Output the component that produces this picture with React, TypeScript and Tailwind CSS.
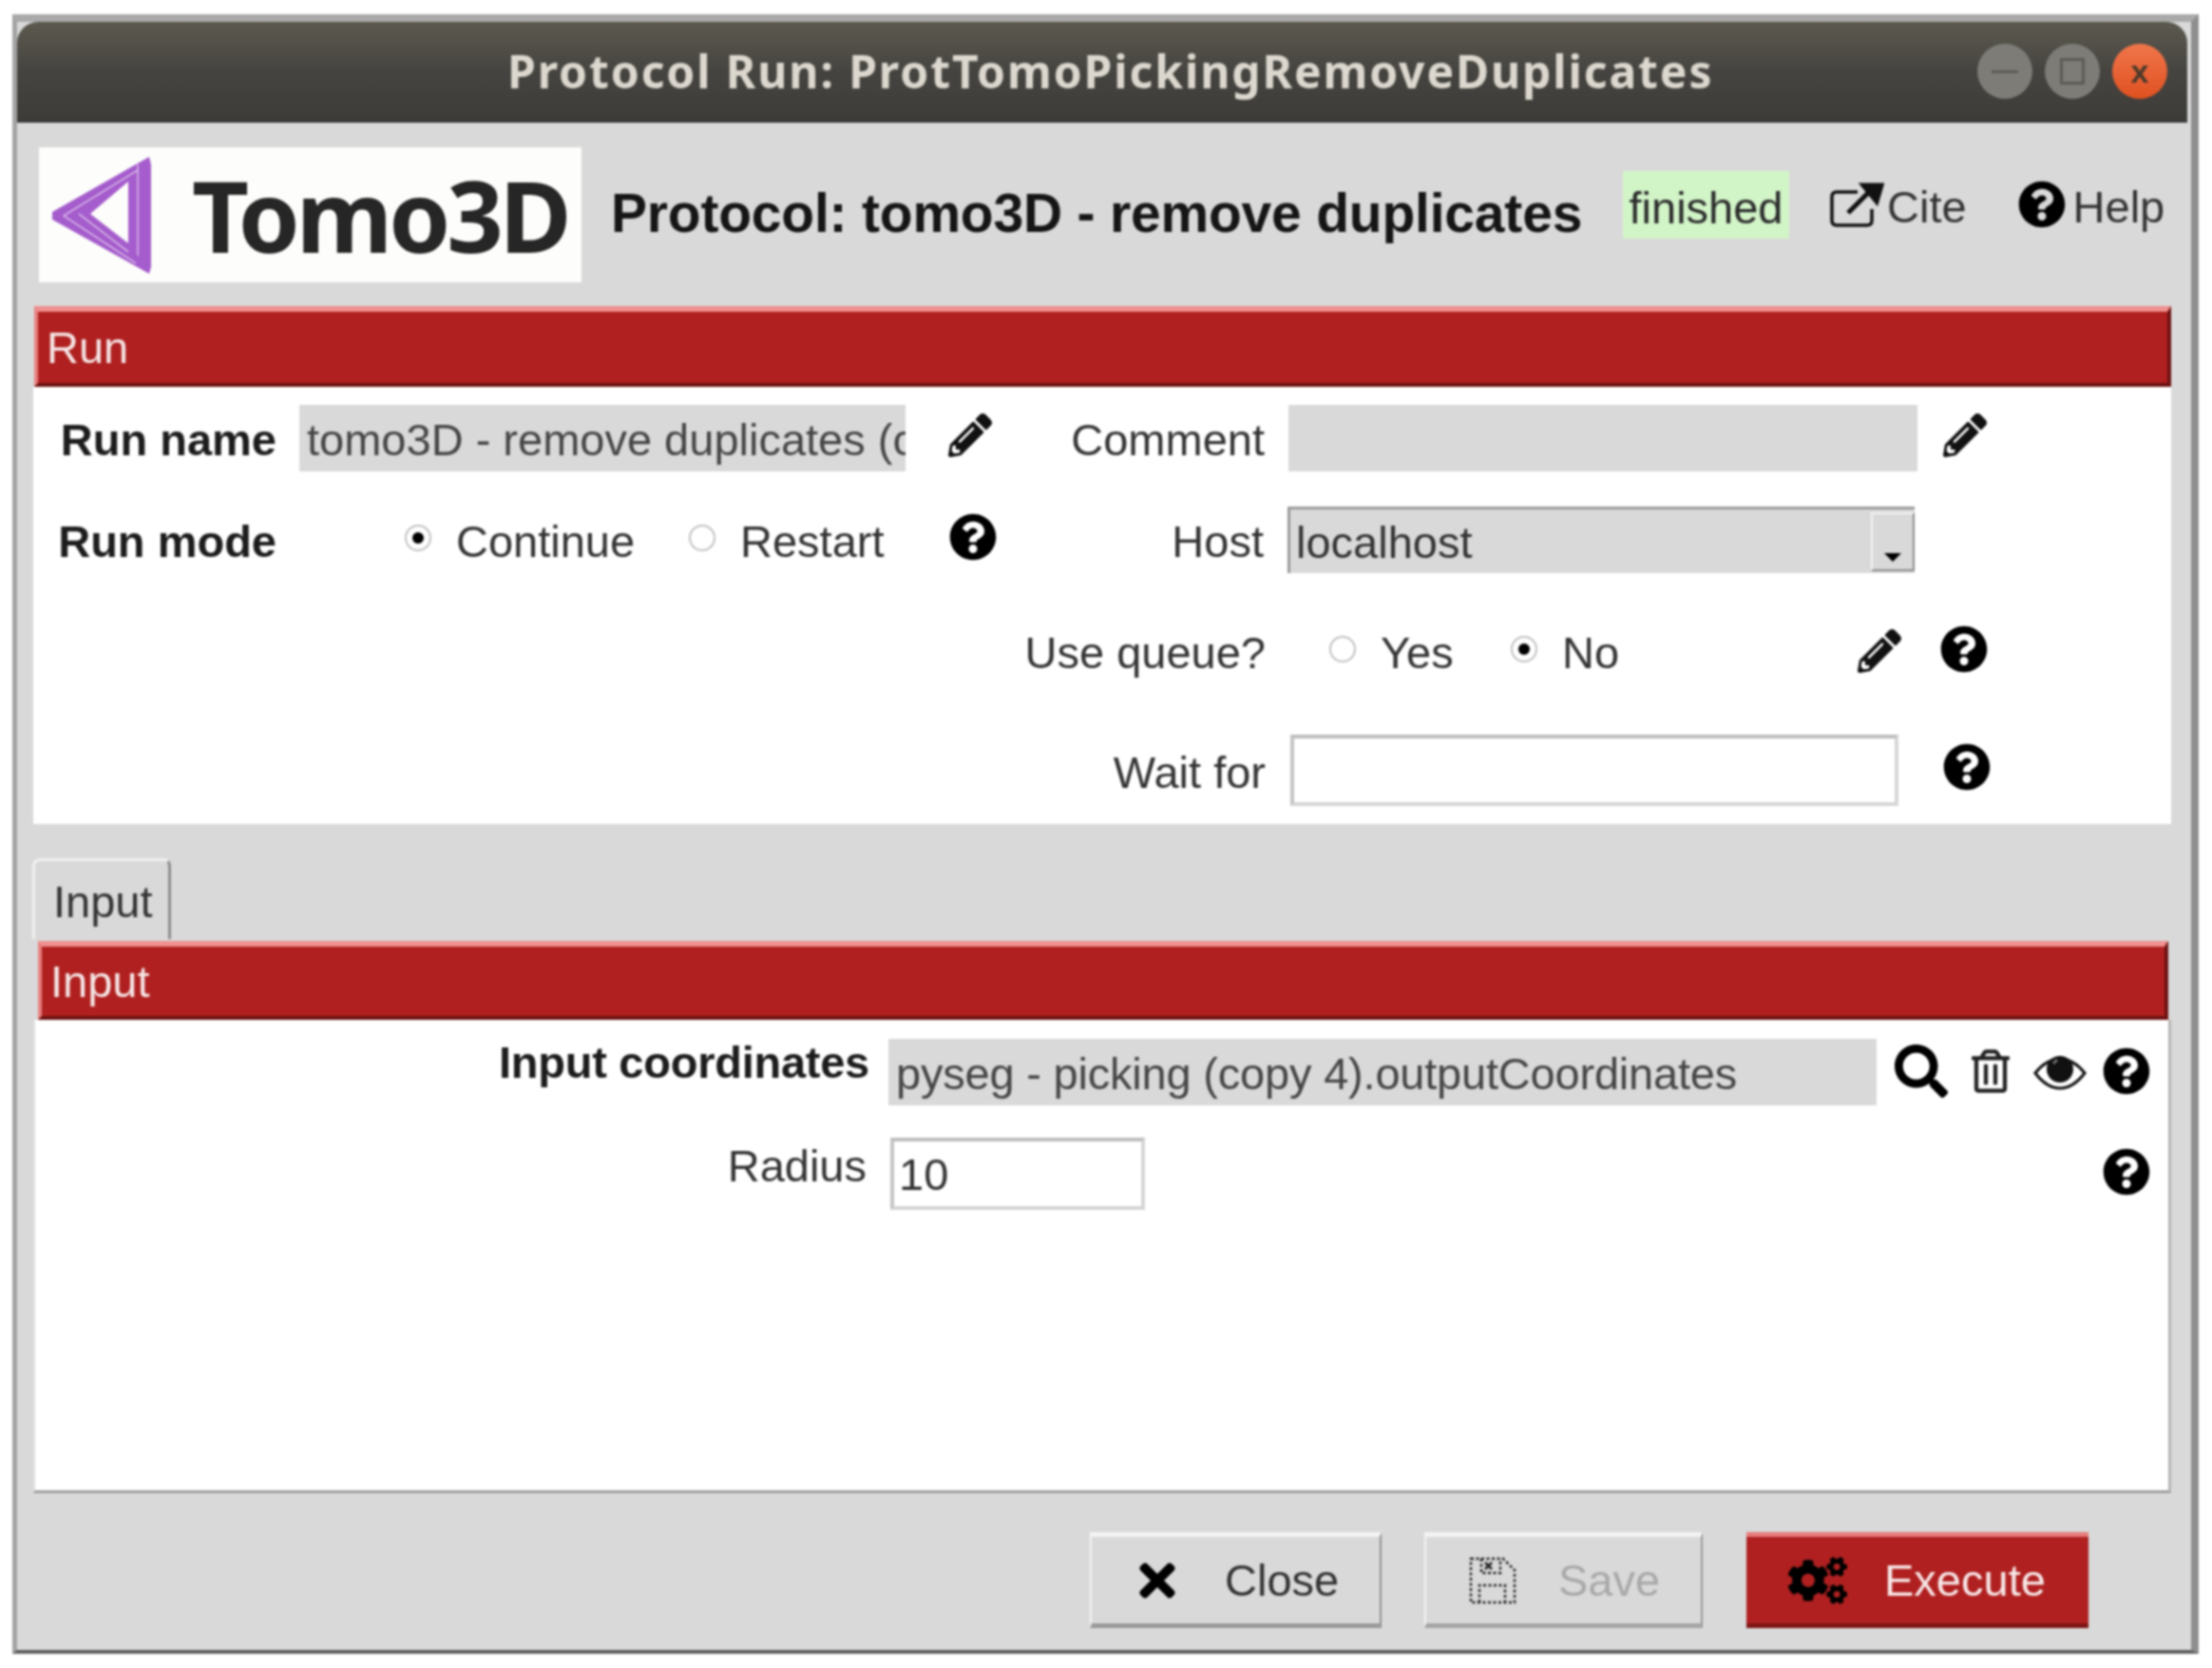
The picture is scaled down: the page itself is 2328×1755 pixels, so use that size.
import type { ReactNode } from 'react'
import { FaCogs, FaPencilAlt, FaQuestionCircle, FaRegTrashAlt, FaSearch, FaTimes } from 'react-icons/fa'

// Tk-style raised band used as section header
function Band({ title, className }: { title: string; className: string }) {
  return (
    <div className={`flex items-center bg-[#b02020] border-t-[6px] border-t-[#f09090] border-b-[4px] border-b-[#6e1212] border-l-[4px] border-l-[#e88080] border-r-[4px] border-r-[#6e1212] pl-[9px] text-[#f6e6e6] ${className}`}>
      {title}
    </div>
  )
}

function Help({ className = '' }: { className?: string }) {
  return <FaQuestionCircle className={`shrink-0 w-[50px] h-[50px] text-black ${className}`} />
}

function Pencil({ className = '' }: { className?: string }) {
  return <FaPencilAlt className={`shrink-0 w-[46px] h-[46px] text-[#111] ${className}`} />
}

function Label({ children, className }: { children: ReactNode; className: string }) {
  return <div className={`shrink-0 pt-[3px] text-right ${className}`}>{children}</div>
}

function Radio({ label, checked, width }: { label: string; checked?: boolean; width: string }) {
  return (
    <div className={`flex items-center shrink-0 ${width}`}>
      <span className="flex items-center justify-center w-[28px] h-[28px] -mt-[4px] rounded-full bg-white border-[2px] border-[#c2c2c2]">
        {checked && <span className="w-[12px] h-[12px] rounded-full bg-black" />}
      </span>
      <span className="ml-[26px] pt-[3px]">{label}</span>
    </div>
  )
}

function Field({ children, className }: { children?: ReactNode; className: string }) {
  return <div className={`flex items-center overflow-hidden whitespace-nowrap bg-[#d9d9d9] pl-[8px] pt-[3px] text-[#454545] ${className}`}>{children}</div>
}

function Entry({ children, className }: { children?: ReactNode; className: string }) {
  return (
    <div className={`flex items-center bg-white border-[4px] border-[#d6d6d6] border-t-[#bdbdbd] border-l-[#c4c4c4] pl-[5px] pt-[2px] text-[#333] ${className}`}>
      {children}
    </div>
  )
}

function TomoLogo() {
  return (
    <div className="flex items-center shrink-0 w-[571px] h-[142px] bg-[#fdfefb] ml-[23px] mt-[26px]">
      <svg viewBox="0 0 104 123" className="shrink-0 w-[104px] h-[123px] ml-[14px]">
        <path fillRule="evenodd" fill="#a55ccc" d="M102 0 L104 8 V116 L102 123 L0 66 V58 Z M80 26 L40 60 L80 91 Z" />
        <path fill="none" stroke="#e6d3f0" strokeWidth="1.2" d="M90 8 V104 M90 14 L12 62 L88 112 M28 60 L80 100" />
      </svg>
      <span className="ml-[43px] whitespace-nowrap font-['Noto_Sans'] font-bold text-[104px] leading-none tracking-[-4px] text-[#262626]">Tomo3D</span>
    </div>
  )
}

function CiteIcon() {
  return (
    <svg viewBox="0 0 58 48" className="shrink-0 w-[58px] h-[48px] -mt-[4px]">
      <path d="M30 10 H8 Q3 10 3 15 V40 Q3 45 8 45 H40 Q45 45 45 40 V28" fill="none" stroke="#111" strokeWidth="3.5" />
      <path d="M20 32 L42 10 M36 3 H55 L50 20 Z" fill="#111" stroke="#111" strokeWidth="5" />
    </svg>
  )
}

function SaveIcon() {
  return (
    <svg viewBox="0 0 50 50" className="shrink-0 ml-[45px] w-[50px] h-[50px]">
      <g fill="none" stroke="#222" strokeWidth="2.4" strokeDasharray="3 2.5">
        <path d="M2 2 H36 L48 14 V48 H2 Z" />
        <path d="M13 2 V17 H33 V2 M11 48 V30 H38 V48" />
      </g>
      <path d="M17 6 L24 13 M24 6 L17 13" stroke="#222" strokeWidth="2.5" />
    </svg>
  )
}

// outline eye with the big pupil seen in the reference
function EyeIcon() {
  return (
    <svg viewBox="0 0 56 40" className="shrink-0 ml-[25px] w-[56px] h-[40px]">
      <path d="M2 21 Q14 6 28 6 Q42 6 54 21 Q42 37 28 37 Q14 37 2 21 Z" fill="#fff" stroke="#111" strokeWidth="3" />
      <circle cx="28" cy="17" r="14" fill="#111" />
      <path d="M21 11 L25 7" stroke="#777" strokeWidth="2.5" />
    </svg>
  )
}

export default function App() {
  return (
    <div className="w-[2328px] h-[1755px] bg-white pt-[15px] pl-[13px] font-['Liberation_Sans',Arial,sans-serif] text-[47px] leading-none text-[#333] blur-[1px]">
      {/* Window frame */}
      <div className="w-[2301px] h-[1725px] flex flex-col bg-[#d9d9d9] border-t-[8px] border-t-[#a9a9a9] border-l-[5px] border-l-[#a3a3a3] border-r-[8px] border-r-[#8e8e8e] border-b-[4px] border-b-[#5e5e5e]">
        {/* Title bar */}
        <div className="flex items-center shrink-0 w-[2284px] h-[106px] rounded-t-[22px] bg-gradient-to-b from-[#5c5a4f] via-[#464440] to-[#3e3c38] border-b-[2px] border-b-[#333]">
          <div className="ml-[516px] w-[1267px] whitespace-nowrap font-['Noto_Sans'] font-bold text-[48px] tracking-[1.9px] text-[#dcd8cf]">
            Protocol Run: ProtTomoPickingRemoveDuplicates
          </div>
          <div className="ml-[280px] flex items-center">
            <span className="flex items-center justify-center w-[58px] h-[58px] rounded-full bg-[#7d7c77]">
              <span className="w-[28px] h-[3px] bg-[#5c5b57]" />
            </span>
            <span className="ml-[13px] flex items-center justify-center w-[58px] h-[58px] rounded-full bg-[#7d7c77]">
              <span className="w-[26px] h-[28px] border-[3px] border-[#5c5b57]" />
            </span>
            <span className="ml-[13px] flex items-center justify-center w-[58px] h-[58px] rounded-full bg-gradient-to-b from-[#f0764a] to-[#e0501f] text-[34px] font-bold text-[#4a3a2a]">
              x
            </span>
          </div>
        </div>

        {/* Protocol header */}
        <div className="flex items-start shrink-0 h-[193px]">
          <TomoLogo />
          <div className="ml-[31px] mt-[67px] w-[1021px] whitespace-nowrap font-bold text-[57px] leading-none tracking-[-0.2px] text-[#151515]">
            Protocol: tomo3D - remove duplicates
          </div>
          <div className="ml-[44px] mt-[51px] flex items-center justify-center w-[175px] h-[71px] pt-[5px] bg-[#d2f5c8] text-[#2a2a2a]">
            finished
          </div>
          <div className="ml-[42px] mt-[65px] flex items-center">
            <CiteIcon />
            <span className="ml-[3px] text-[#333]">Cite</span>
            <FaQuestionCircle className="ml-[54px] -mt-[6px] w-[50px] h-[50px] text-black" />
            <span className="ml-[8px] text-[#333]">Help</span>
          </div>
        </div>

        {/* Run section */}
        <Band title="Run" className="shrink-0 ml-[18px] w-[2249px] h-[85px]" />
        <div className="shrink-0 ml-[17px] w-[2250px] h-[460px] bg-white">
          <div className="flex items-center mt-[19px] h-[70px]">
            <Label className="w-[256px] font-bold text-[#1c1c1c]">Run name</Label>
            <Field className="shrink-0 ml-[24px] w-[638px] h-[70px]">tomo3D - remove duplicates (copy 1)</Field>
            <Pencil className="ml-[45px] -mt-[6px]" />
            <Label className="w-[287px]">Comment</Label>
            <Field className="shrink-0 ml-[25px] w-[662px] h-[70px]" />
            <Pencil className="ml-[27px] -mt-[6px]" />
          </div>
          <div className="flex items-center mt-[37px] h-[70px]">
            <Label className="w-[256px] font-bold text-[#1c1c1c]">Run mode</Label>
            <div className="ml-[135px] flex">
              <Radio label="Continue" checked width="w-[299px]" />
              <Radio label="Restart" width="w-[274px]" />
            </div>
            <Help className="-mt-[6px]" />
            <Label className="w-[281px]">Host</Label>
            <div className="ml-[25px] flex items-center justify-between w-[660px] h-[70px] bg-[#d9d9d9] border-t-[3px] border-l-[3px] border-[#9a9a9a] pl-[6px] text-[#333]">
              <span className="pt-[2px]">localhost</span>
              <span className="flex items-end justify-center w-[46px] h-[62px] border-[2px] border-t-[#f3f3f3] border-l-[#f3f3f3] border-r-[#8a8a8a] border-b-[#8a8a8a] pb-[8px]">
                <span className="border-x-[9px] border-t-[9px] border-x-transparent border-t-black" />
              </span>
            </div>
          </div>
          <div className="flex items-center mt-[52px] h-[60px]">
            <Label className="w-[1297px]">Use queue?</Label>
            <div className="ml-[67px] flex">
              <Radio label="Yes" width="w-[191px]" />
              <Radio label="No" checked width="w-[365px]" />
            </div>
            <Pencil />
            <Help className="ml-[41px] -mt-[4px]" />
          </div>
          <div className="flex items-center mt-[58px] h-[75px]">
            <Label className="w-[1297px]">Wait for</Label>
            <Entry className="ml-[26px] w-[640px] h-[75px]" />
            <Help className="ml-[47px] -mt-[8px]" />
          </div>
        </div>

        {/* Notebook */}
        <div className="shrink-0 ml-[16px] mt-[36px] flex items-center w-[146px] h-[85px] pl-[19px] pt-[2px] bg-[#d9d9d9] border-t-[3px] border-l-[3px] border-t-[#f0f0f0] border-l-[#f0f0f0] border-r-[3px] border-r-[#8d8d8d] rounded-tr-[8px] rounded-tl-[8px] text-[#333]">
          Input
        </div>
        <Band title="Input" className="shrink-0 mt-[2px] ml-[22px] w-[2242px] h-[83px]" />
        <div className="shrink-0 ml-[17px] w-[2250px] h-[498px] bg-white border-r-[3px] border-r-[#b5b5b5] border-b-[3px] border-b-[#9e9e9e] border-l-[2px] border-l-[#e0e0e0]">
          <div className="flex items-center mt-[20px] h-[70px]">
            <Label className="w-[878px] pb-[24px] font-bold tracking-[-0.25px] text-[#1c1c1c]">Input coordinates</Label>
            <Field className="shrink-0 ml-[20px] w-[1040px] h-[70px] tracking-[-0.2px]">pyseg - picking (copy 4).outputCoordinates</Field>
            <FaSearch className="shrink-0 ml-[19px] -mt-[3px] w-[56px] h-[56px] text-black" />
            <FaRegTrashAlt className="shrink-0 ml-[25px] -mt-[3px] w-[40px] h-[46px] text-[#222]" />
            <EyeIcon />
            <Help className="ml-[17px] -mt-[2px]" />
          </div>
          <div className="flex items-center mt-[34px] h-[75px]">
            <Label className="w-[875px] pb-[19px]">Radius</Label>
            <Entry className="ml-[25px] w-[268px] h-[76px]">10</Entry>
            <Help className="ml-[1008px] -mt-[4px]" />
          </div>
        </div>

        {/* Action buttons */}
        <div className="flex items-center shrink-0 mt-[41px] ml-[1129px] h-[101px]">
          <div className="flex items-center w-[307px] h-[101px] bg-[#d9d9d9] border-t-[5px] border-t-[#f3f3f3] border-l-[2px] border-l-[#f3f3f3] border-r-[2px] border-r-[#8f8f8f] border-b-[5px] border-b-[#9a9a9a] text-[#333]">
            <FaTimes className="ml-[42px] w-[54px] h-[54px] text-black" />
            <span className="ml-[44px]">Close</span>
          </div>
          <div className="ml-[45px] flex items-center w-[293px] h-[101px] bg-[#d9d9d9] border-t-[5px] border-t-[#f3f3f3] border-l-[2px] border-l-[#f3f3f3] border-r-[2px] border-r-[#9a9a9a] border-b-[5px] border-b-[#a5a5a5] text-[#a9a9a9]">
            <SaveIcon />
            <span className="ml-[44px]">Save</span>
          </div>
          <div className="ml-[46px] flex items-center w-[360px] h-[101px] bg-[#b02020] border-t-[5px] border-t-[#e67c7c] border-b-[5px] border-b-[#7d1616] text-[#f8e8e8]">
            <FaCogs className="ml-[44px] w-[62px] h-[60px] text-black" />
            <span className="ml-[39px]">Execute</span>
          </div>
        </div>
      </div>
    </div>
  )
}
